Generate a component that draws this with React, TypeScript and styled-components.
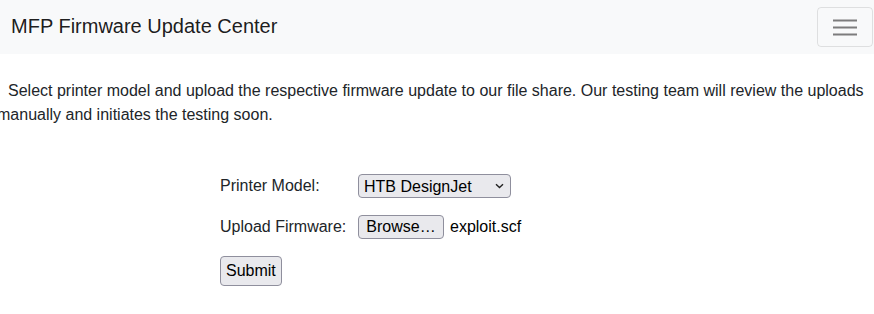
import styled, { createGlobalStyle } from "styled-components";

const GlobalStyle = createGlobalStyle`
  html, body {
    margin: 0;
    padding: 0;
    background: #fff;
  }
  body {
    font-family: "Liberation Sans", Arial, sans-serif;
    font-size: 16px;
    line-height: 1.5;
    color: #212529;
    overflow: hidden;
  }
`;

const App = () => {
  return (
    <>
      <GlobalStyle />
      <Navbar>
        <Brand>MFP Firmware Update Center</Brand>
        <Toggler type="button" aria-label="Toggle navigation">
          <svg width="24" height="24" viewBox="0 0 24 24">
            <path
              d="M0 5.5h24M0 12.5h24M0 19.5h24"
              stroke="rgba(0,0,0,0.5)"
              strokeWidth="2"
            />
          </svg>
        </Toggler>
      </Navbar>
      <Main>
        <Intro>
          Select printer model and upload the respective firmware update to our file share. Our testing
          team will review the uploads manually and initiates the testing soon.
        </Intro>
        <Form onSubmit={(e) => e.preventDefault()}>
          <Row>
            <Label>Printer Model:</Label>
            <SelectWrap>
              <Select defaultValue="designjet">
                <option value="designjet">HTB DesignJet</option>
              </Select>
              <Chevron width="9" height="6" viewBox="0 0 9 6">
                <path d="M1 1.2l3.5 3.3 3.5-3.3" fill="none" stroke="#222" strokeWidth="1.4" />
              </Chevron>
            </SelectWrap>
          </Row>
          <Row>
            <Label>Upload Firmware:</Label>
            <FileField>
              <FormButton type="button" $width={86}>Browse…</FormButton>
              <FileName>exploit.scf</FileName>
            </FileField>
          </Row>
          <Row $tall>
            <FormButton type="submit" $tall>Submit</FormButton>
          </Row>
        </Form>
      </Main>
    </>
  );
};

const Navbar = styled.nav`
  display: flex;
  align-items: center;
  justify-content: space-between;
  height: 54px;
  padding: 0 1px 2px 11px;
  box-sizing: border-box;
  background: #f8f9fa;
`;

const Brand = styled.span`
  font-size: 20px;
  line-height: 30px;
  color: rgba(0, 0, 0, 0.9);
`;

const Toggler = styled.button`
  display: flex;
  align-items: center;
  justify-content: center;
  width: 56px;
  height: 40px;
  padding: 0;
  margin-top: 2px;
  background: transparent;
  border: 1px solid rgba(0, 0, 0, 0.1);
  border-radius: 4px;
`;

const Main = styled.main`
  padding-top: 25px;
`;

const Intro = styled.p`
  margin: 0 0 0 -3px;
  text-indent: 11px;
  width: 870px;
`;

const Form = styled.form`
  margin: 47px 0 0 220px;
  display: flex;
  flex-direction: column;
  gap: 17px;
`;

const Row = styled.div<{ $tall?: boolean }>`
  display: flex;
  align-items: center;
  height: ${(p) => (p.$tall ? 30 : 24)}px;
`;

const Label = styled.label`
  width: 138px;
  flex: none;
`;

const SelectWrap = styled.div`
  position: relative;
  width: 153px;
  height: 24px;
`;

const Select = styled.select`
  appearance: none;
  width: 100%;
  height: 100%;
  box-sizing: border-box;
  padding: 0 20px 0 5px;
  font-family: "Liberation Sans", Arial, sans-serif;
  font-size: 16px;
  color: #000;
  background: #e9e9ed;
  border: 1px solid #8f8f9d;
  border-radius: 4px;
`;

const Chevron = styled.svg`
  position: absolute;
  right: 7px;
  top: 9px;
  pointer-events: none;
`;

const FileField = styled.div`
  display: flex;
  align-items: center;
  gap: 6px;
`;

const FormButton = styled.button<{ $width?: number; $tall?: boolean }>`
  height: ${(p) => (p.$tall ? 30 : 24)}px;
  width: ${(p) => (p.$width ? `${p.$width}px` : "auto")};
  box-sizing: border-box;
  padding: 0 5px;
  font-family: "Liberation Sans", Arial, sans-serif;
  font-size: 16px;
  color: #000;
  background: #e9e9ed;
  border: 1px solid #8f8f9d;
  border-radius: 4px;
`;

const FileName = styled.span`
  color: #000;
`;

export default App;
